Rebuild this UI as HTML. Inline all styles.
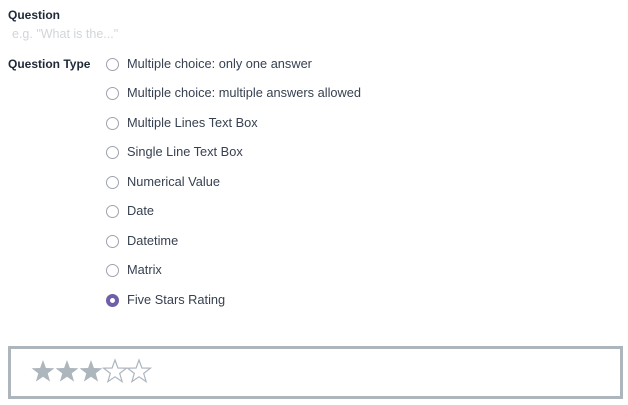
<!DOCTYPE html>
<html><head><style>
body{margin:0;width:628px;height:405px;background:#fff;font-family:"Liberation Sans",sans-serif;font-size:12.8px;color:#374151;position:relative;overflow:hidden}
.lbl{position:absolute;left:8px;font-weight:bold;color:#1f2937;font-size:12px}
.ph{position:absolute;left:12px;top:27px;color:#d1d5db;font-size:12.5px}
.row{position:absolute;left:106px;height:16px;line-height:16px;white-space:nowrap}
.r{display:inline-block;width:11px;height:11px;border:1px solid #9ca3af;border-radius:50%;vertical-align:-3px;margin-right:8px;box-sizing:content-box}
.r.on{border:4px solid #6f5fa8;width:5px;height:5px}
.box{position:absolute;left:8px;top:346px;width:609px;height:47px;border:3px solid #adb5bd}
svg{position:absolute;left:20px;top:9px}
</style></head><body>
<div class="lbl" style="top:8px">Question</div>
<div class="ph">e.g. "What is the..."</div>
<div class="lbl" style="top:57px">Question Type</div>
<div class="row" style="top:56px"><span class="r"></span>Multiple choice: only one answer</div>
<div class="row" style="top:85px"><span class="r"></span>Multiple choice: multiple answers allowed</div>
<div class="row" style="top:115px"><span class="r"></span>Multiple Lines Text Box</div>
<div class="row" style="top:144px"><span class="r"></span>Single Line Text Box</div>
<div class="row" style="top:174px"><span class="r"></span>Numerical Value</div>
<div class="row" style="top:203px"><span class="r"></span>Date</div>
<div class="row" style="top:233px"><span class="r"></span>Datetime</div>
<div class="row" style="top:262px"><span class="r"></span>Matrix</div>
<div class="row" style="top:292px"><span class="r on"></span>Five Stars Rating</div>
<div class="box">
<svg width="125" height="26" viewBox="0 0 125 26">
<defs><path id="s" d="M12 1 L14.9 9 L23.4 9.2 L16.7 14.4 L19.1 22.6 L12 17.8 L4.9 22.6 L7.3 14.4 L0.6 9.2 L9.1 9 Z"/></defs>
<use href="#s" x="0" y="1" fill="#adb5bd"/>
<use href="#s" x="24" y="1" fill="#adb5bd"/>
<use href="#s" x="48" y="1" fill="#adb5bd"/>
<use href="#s" x="72" y="1" fill="none" stroke="#adb5bd" stroke-width="1.2"/>
<use href="#s" x="96" y="1" fill="none" stroke="#adb5bd" stroke-width="1.2"/>
</svg>
</div>
</body></html>
